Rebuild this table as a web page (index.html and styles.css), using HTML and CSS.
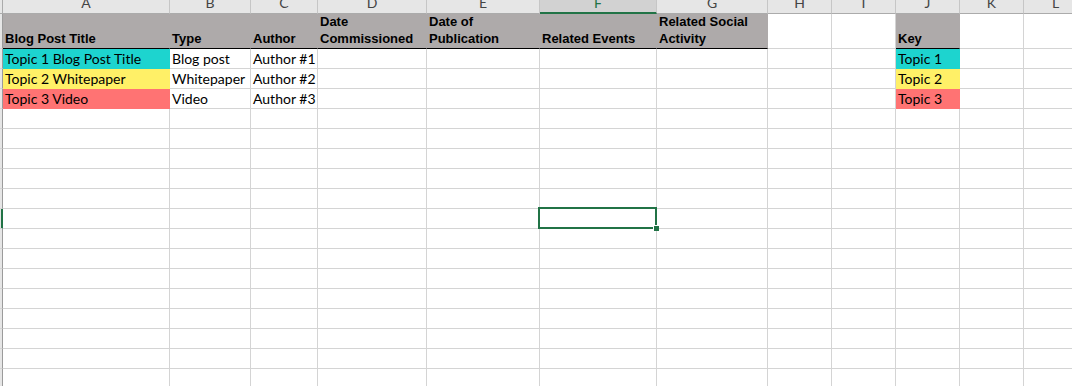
FILE: index.html
```html
<!DOCTYPE html>
<html>
<head>
<meta charset="utf-8">
<link rel="stylesheet" href="styles.css">
</head>
<body>
<div class="sheet">
  <div class="ch corner"></div><div class="ch">A</div><div class="ch">B</div><div class="ch">C</div><div class="ch">D</div><div class="ch">E</div><div class="ch sel">F</div><div class="ch">G</div><div class="ch">H</div><div class="ch">I</div><div class="ch">J</div><div class="ch">K</div><div class="ch">L</div>

  <div class="rh"></div>
  <div class="hd">Blog Post Title</div>
  <div class="hd">Type</div>
  <div class="hd">Author</div>
  <div class="hd">Date<br>Commissioned</div>
  <div class="hd">Date of<br>Publication</div>
  <div class="hd">Related Events</div>
  <div class="hd">Related Social<br>Activity</div>
  <div></div><div></div>
  <div class="hd">Key</div>
  <div></div><div></div>

  <div class="rh"></div><div class="d teal">Topic 1 Blog Post Title</div><div class="d">Blog post</div><div class="d">Author #1</div><div></div><div></div><div></div><div></div><div></div><div></div><div class="d teal">Topic 1</div><div></div><div></div>
  <div class="rh"></div><div class="d yellow">Topic 2 Whitepaper</div><div class="d">Whitepaper</div><div class="d">Author #2</div><div></div><div></div><div></div><div></div><div></div><div></div><div class="d yellow">Topic 2</div><div></div><div></div>
  <div class="rh"></div><div class="d red">Topic 3 Video</div><div class="d">Video</div><div class="d">Author #3</div><div></div><div></div><div></div><div></div><div></div><div></div><div class="d red">Topic 3</div><div></div><div></div>
  <div class="rh"></div><div></div><div></div><div></div><div></div><div></div><div></div><div></div><div></div><div></div><div></div><div></div><div></div>
  <div class="rh"></div><div></div><div></div><div></div><div></div><div></div><div></div><div></div><div></div><div></div><div></div><div></div><div></div>
  <div class="rh"></div><div></div><div></div><div></div><div></div><div></div><div></div><div></div><div></div><div></div><div></div><div></div><div></div>
  <div class="rh"></div><div></div><div></div><div></div><div></div><div></div><div></div><div></div><div></div><div></div><div></div><div></div><div></div>
  <div class="rh"></div><div></div><div></div><div></div><div></div><div></div><div></div><div></div><div></div><div></div><div></div><div></div><div></div>
  <div class="rh rsel"></div><div></div><div></div><div></div><div></div><div></div><div class="active"><span class="selbox"></span><span class="handle"></span></div><div></div><div></div><div></div><div></div><div></div><div></div>
  <div class="rh"></div><div></div><div></div><div></div><div></div><div></div><div></div><div></div><div></div><div></div><div></div><div></div><div></div>
  <div class="rh"></div><div></div><div></div><div></div><div></div><div></div><div></div><div></div><div></div><div></div><div></div><div></div><div></div>
  <div class="rh"></div><div></div><div></div><div></div><div></div><div></div><div></div><div></div><div></div><div></div><div></div><div></div><div></div>
  <div class="rh"></div><div></div><div></div><div></div><div></div><div></div><div></div><div></div><div></div><div></div><div></div><div></div><div></div>
  <div class="rh"></div><div></div><div></div><div></div><div></div><div></div><div></div><div></div><div></div><div></div><div></div><div></div><div></div>
  <div class="rh"></div><div></div><div></div><div></div><div></div><div></div><div></div><div></div><div></div><div></div><div></div><div></div><div></div>
  <div class="rh"></div><div></div><div></div><div></div><div></div><div></div><div></div><div></div><div></div><div></div><div></div><div></div><div></div>
  <div class="rh"></div><div></div><div></div><div></div><div></div><div></div><div></div><div></div><div></div><div></div><div></div><div></div><div></div>
</div>
</body>
</html>
```

FILE: styles.css
```css
html, body {
  margin: 0;
  padding: 0;
  background: #ffffff;
  overflow: hidden;
}

.sheet {
  display: grid;
  grid-template-columns: 3px 167px 81px 67px 109px 113px 117px 111px 64px 64px 64px 64px 64px;
  grid-template-rows: 14px 35px;
  grid-auto-rows: 20px;
  width: 1088px;
  font-family: Lato, "Liberation Sans", sans-serif;
  font-size: 14px;
  color: #000;
}

.sheet > div {
  box-sizing: border-box;
  border-right: 1px solid #d4d4d4;
  border-bottom: 1px solid #d4d4d4;
  white-space: nowrap;
  min-width: 0;
}

/* column headers */
.sheet > .ch {
  background: #e6e6e6;
  border-right-color: #c6c6c6;
  border-bottom-color: #ababab;
  color: #444;
  text-align: center;
  line-height: 5px;
  overflow: hidden;
}
.sheet > .ch.corner {
  border-right-color: #ababab;
}
.sheet > .ch.sel {
  background: #d2d2d2;
  color: #217346;
  border-bottom: 2px solid #217346;
}

/* row headers */
.sheet > .rh {
  background: #e6e6e6;
  border-right-color: #9b9b9b;
}
.sheet > .rh.rsel {
  background: linear-gradient(to right, #e6e6e6 1px, #217346 1px);
  border-right-color: #217346;
}

/* header row */
.sheet > .hd {
  background: #aeaaaa;
  border-right-color: #aeaaaa;
  border-bottom-color: #000;
  font-family: "Liberation Sans", Arial, sans-serif;
  font-weight: bold;
  font-size: 13px;
  line-height: 17px;
  padding: 0 0 1px 2px;
  display: flex;
  flex-direction: column;
  justify-content: flex-end;
}

/* data cells */
.sheet > .d {
  line-height: 19px;
  padding-left: 2px;
  overflow: hidden;
}
.sheet > .teal {
  background: #1dd4cf;
  border-color: #1dd4cf;
}
.sheet > .yellow {
  background: #fff067;
  border-color: #fff067;
}
.sheet > .red {
  background: #ff7373;
  border-color: #ff7373;
}

/* active cell */
.sheet > .active {
  position: relative;
}
.selbox {
  position: absolute;
  left: -2px;
  top: -2px;
  width: 119px;
  height: 22px;
  box-sizing: border-box;
  border: 2px solid #217346;
}
.handle {
  position: absolute;
  left: 113px;
  top: 16px;
  width: 6px;
  height: 6px;
  box-sizing: border-box;
  background: #217346;
  border-left: 1px solid #fff;
  border-top: 1px solid #fff;
}
```
